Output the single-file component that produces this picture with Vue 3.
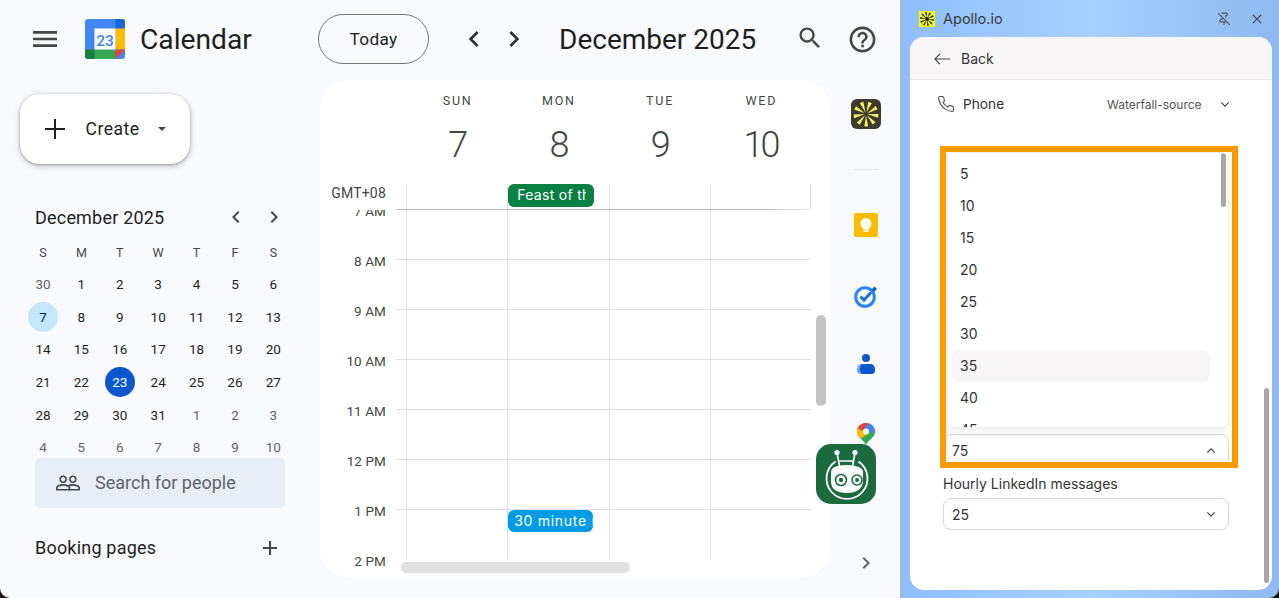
<template>
  <div class="window">
    <div class="calendar">
      <header class="topbar">
        <div class="brand">
          <svg class="menu-icon" viewBox="0 0 24 24"><path d="M3 18h18v-2H3v2zm0-5h18v-2H3v2zm0-7v2h18V6H3z" /></svg>
          <svg class="logo" viewBox="0 0 40 40">
            <rect width="40" height="40" rx="3" fill="#4285f4" />
            <path d="M30.500 0H37a3 3 0 0 1 3 3v6.500h-9.500z" fill="#1967d2" />
            <rect x="30.500" y="9.500" width="9.500" height="21" fill="#fbbc04" />
            <path d="M9.500 30.500h21V40h-21z" fill="#34a853" />
            <path d="M0 30.500h9.500V40H3a3 3 0 0 1-3-3z" fill="#188038" />
            <path d="M30.500 30.500H40L30.500 40z" fill="#ea4335" />
            <rect x="9.500" y="9.500" width="21" height="21" fill="#fff" />
            <text x="20" y="26.500" text-anchor="middle" class="logo-text">23</text>
          </svg>
          <span class="brand-name">Calendar</span>
        </div>
        <button class="today-btn">Today</button>
        <svg class="nav-icon first" viewBox="0 0 24 24"><path d="M15.410 7.410L14 6l-6 6 6 6 1.410-1.410L10.830 12z" /></svg>
        <svg class="nav-icon second" viewBox="0 0 24 24"><path d="M10 6L8.590 7.410 13.170 12l-4.580 4.590L10 18l6-6z" /></svg>
        <h1 class="month-title">December 2025</h1>
        <svg class="search-icon" viewBox="0 0 24 24"><path d="M15.500 14h-.79l-.28-.27C15.410 12.590 16 11.110 16 9.500 16 5.910 13.090 3 9.500 3S3 5.910 3 9.500 5.910 16 9.500 16c1.610 0 3.090-.59 4.230-1.570l.27.28v.79l5 4.990L20.490 19l-4.990-5zm-6 0C7.010 14 5 11.990 5 9.500S7.010 5 9.500 5 14 7.010 14 9.500 11.990 14 9.500 14z" /></svg>
        <svg class="help-icon" viewBox="0 0 24 24"><path d="M11 18h2v-2h-2v2zm1-16C6.480 2 2 6.480 2 12s4.480 10 10 10 10-4.480 10-10S17.520 2 12 2zm0 18c-4.410 0-8-3.590-8-8s3.590-8 8-8 8 3.590 8 8-3.590 8-8 8zm0-14c-2.210 0-4 1.790-4 4h2c0-1.100.9-2 2-2s2 .9 2 2c0 2-3 1.750-3 5h2c0-2.250 3-2.500 3-5 0-2.210-1.790-4-4-4z" /></svg>
      </header>

      <div class="columns">
        <aside class="sidebar">
          <button class="create-btn">
            <svg class="create-plus" viewBox="0 0 20 20"><path d="M9 0h2v9h9v2h-9v9H9v-9H0V9h9z" /></svg>
            <span class="create-label">Create</span>
            <span class="caret"></span>
          </button>

          <div class="mini-head">
            <span>December 2025</span>
            <svg class="mini-nav left" viewBox="0 0 24 24"><path d="M15.410 7.410L14 6l-6 6 6 6 1.410-1.410L10.830 12z" /></svg>
            <svg class="mini-nav" viewBox="0 0 24 24"><path d="M10 6L8.590 7.410 13.170 12l-4.580 4.590L10 18l6-6z" /></svg>
          </div>

          <div class="mini-grid">
            <span v-for="(d, i) in weekLetters" :key="'w' + i" class="mini-week">{{ d }}</span>
            <span
              v-for="(d, i) in miniDays"
              :key="i"
              class="mini-day"
              :class="{ muted: d.muted, picked: d.n === 7 && !d.muted, today: d.n === 23 }"
            ><i>{{ d.n }}</i></span>
          </div>

          <div class="people-search">
            <svg class="people-icon" viewBox="0 0 24 24"><path d="M16.500 13c-1.200 0-3.070.34-4.500 1-1.430-.67-3.300-1-4.500-1C5.330 13 1 14.080 1 16.250V19h22v-2.750c0-2.170-4.330-3.250-6.500-3.250zm-4 4.500h-10v-1.250c0-.54 2.560-1.750 5-1.750s5 1.210 5 1.750v1.250zm9 0H14v-1.250c0-.46-.2-.86-.52-1.220.88-.3 1.960-.53 3.020-.53 2.440 0 5 1.210 5 1.750v1.250zM7.500 12c1.930 0 3.500-1.570 3.500-3.500S9.430 5 7.500 5 4 6.570 4 8.500 5.570 12 7.500 12zm0-5.500c1.100 0 2 .9 2 2s-.9 2-2 2-2-.9-2-2 .9-2 2-2zm9 5.500c1.930 0 3.500-1.570 3.500-3.500S18.430 5 16.500 5 13 6.570 13 8.500s1.570 3.500 3.500 3.500zm0-5.500c1.100 0 2 .9 2 2s-.9 2-2 2-2-.9-2-2 .9-2 2-2z" /></svg>
            <span>Search for people</span>
          </div>

          <div class="booking">
            <span>Booking pages</span>
            <svg class="booking-plus" viewBox="0 0 24 24"><path d="M19 13h-6v6h-2v-6H5v-2h6V5h2v6h6v2z" /></svg>
          </div>
        </aside>

        <main class="week-card">
          <div class="week-head">
            <div v-for="d in weekDays" :key="d.name" class="day-head">
              <div class="day-name">{{ d.name }}</div>
              <div class="day-num">{{ d.num }}</div>
            </div>
          </div>
          <div class="allday">
            <div class="gmt">GMT+08</div>
            <div class="allday-cell"></div>
            <div class="allday-cell"><div class="feast"><span>Feast of the Immaculate</span></div></div>
            <div class="allday-cell"></div>
            <div class="allday-cell last"></div>
          </div>
          <div class="allday-rule"></div>
          <div class="week-body">
            <div class="hours">
              <div v-for="h in hours" :key="h" class="hour">{{ h }}</div>
            </div>
            <div class="hour-grid">
              <div class="day-col"></div>
              <div class="day-col">
                <div class="meeting">30 minute meeting</div>
              </div>
              <div class="day-col"></div>
              <div class="day-col"></div>
            </div>
          </div>
          <div class="scroll-x"></div>
          <div class="scroll-y"></div>
        </main>

        <nav class="rail">
          <svg class="apollo-app" viewBox="0 0 30 30">
            <rect width="30" height="30" rx="6" fill="#3d3a2f" />
            <polygon v-for="(p, i) in starLarge" :key="i" :points="p" fill="#f8fb5a" />
          </svg>
          <div class="rail-divider"></div>
          <svg class="keep" viewBox="0 0 24 24">
            <rect width="24" height="24" rx="2" fill="#fbbc04" />
            <circle cx="12" cy="10.500" r="5.500" fill="#fff" />
            <rect x="9.500" y="14" width="5" height="3" fill="#fff" />
            <rect x="9.500" y="17.500" width="5" height="1.500" fill="#fff" />
          </svg>
          <svg class="tasks" viewBox="0 0 24 24">
            <circle cx="11" cy="13" r="9.300" fill="none" stroke="#2684fc" stroke-width="3" />
            <path d="M6.500 12.500l3.500 3.500 7-7.500" fill="none" stroke="#1a6fe0" stroke-width="3" />
            <path d="M17.500 5.500l3-3 2.500 2.500-3 3z" fill="#0f5fd0" />
          </svg>
          <svg class="contacts" viewBox="0 0 18 22">
            <circle cx="9" cy="4" r="4" fill="#0b57d0" />
            <path d="M0 16c0-4 2-6 5-6h8c3 0 5 2 5 6 0 3-2 4-4 4H4c-2 0-4-1-4-4z" fill="#6f9ff0" />
            <path d="M3 15c0-3 1-5 3-5h7c3 0 5 2 5 6 0 3-2 4-4 4H6c-2 0-3-2-3-5z" fill="#0b57d0" />
          </svg>
          <svg class="maps" viewBox="0 0 18 22">
            <defs>
              <clipPath id="pin">
                <path d="M9 0C4 0 0 4 0 8.500c0 2.600 1.200 4.600 3 6.500 2.500 2.600 5 4.500 6 7 1-2.500 3.500-4.400 6-7 1.800-1.900 3-3.900 3-6.500C18 4 14 0 9 0z" />
              </clipPath>
            </defs>
            <g clip-path="url(#pin)">
              <rect width="18" height="22" fill="#34a853" />
              <polygon points="0,0 12,0 4,9 0,5" fill="#ea4335" />
              <polygon points="12,0 18,0 18,11 11,7 6,7" fill="#4285f4" />
              <polygon points="0,5 6,8 11,11 3,16 0,14" fill="#fbbc04" />
            </g>
            <circle cx="9" cy="8.500" r="3" fill="#fff" />
          </svg>
          <svg class="rail-chevron" viewBox="0 0 24 24"><path d="M10 6L8.590 7.410 13.170 12l-4.580 4.590L10 18l6-6z" /></svg>
        </nav>
      </div>

      <!-- floating bot launcher -->
      <svg class="bot" viewBox="0 0 60 60">
        <rect width="60" height="60" rx="15" fill="#1c6b3f" />
        <path d="M19.500 17.500a20.500 20.500 0 1 0 23 0" fill="none" stroke="#fff" stroke-width="1.800" />
        <path d="M21 9l2.500 13M39 9l-2.500 13M22 17h16" stroke="#fff" stroke-width="1.600" />
        <circle cx="21" cy="8.500" r="2.600" fill="#fff" />
        <circle cx="39" cy="8.500" r="2.600" fill="#fff" />
        <path d="M15 28c0-4 5-7 15-7 11 0 17 3 17 7v9c0 8-7 12-16 12-11 0-16-4-16-12z" fill="#fff" />
        <circle cx="25" cy="36" r="5.500" fill="none" stroke="#1c6b3f" stroke-width="1.600" />
        <circle cx="25" cy="36" r="2.200" fill="#1c6b3f" />
        <circle cx="41" cy="36" r="5" fill="none" stroke="#1c6b3f" stroke-width="1.600" />
        <circle cx="41" cy="36" r="2" fill="#1c6b3f" />
      </svg>
    </div>

    <div class="panel">
      <div class="panel-title">
        <svg class="apollo-small" viewBox="0 0 16 16">
          <rect width="16" height="16" fill="#f4f91c" />
          <polygon v-for="(p, i) in starSmall" :key="i" :points="p" fill="#1c1c10" />
          <circle cx="8" cy="8" r="2" fill="#1c1c10" />
        </svg>
        <span class="panel-name">Apollo.io</span>
        <svg class="pin-off" viewBox="0 0 24 24"><path d="M12 17v5M9 9v1.760a2 2 0 0 1-1.110 1.790l-1.780.9A2 2 0 0 0 5 15.240V17h12M15 9.340V6h1a2 2 0 0 0 0-4H7.890M2 2l20 20M9 6.500V6" /></svg>
        <svg class="close-x" viewBox="0 0 24 24"><path d="M5 5l14 14M19 5L5 19" /></svg>
      </div>

      <div class="panel-card">
        <div class="back-row">
          <svg class="back-arrow" viewBox="0 0 16 12"><path d="M6 .8L.8 6 6 11.200M.8 6H16" /></svg>
          <span>Back</span>
        </div>
        <div class="panel-body">
          <div class="phone-row">
            <svg class="phone-icon" viewBox="0 0 24 24"><path d="M22 16.920v3a2 2 0 0 1-2.180 2 19.790 19.790 0 0 1-8.630-3.070 19.500 19.500 0 0 1-6-6 19.790 19.790 0 0 1-3.070-8.670A2 2 0 0 1 4.110 2h3a2 2 0 0 1 2 1.720 12.840 12.840 0 0 0 .7 2.810 2 2 0 0 1-.45 2.110L8.090 9.910a16 16 0 0 0 6 6l1.270-1.270a2 2 0 0 1 2.110-.45 12.840 12.840 0 0 0 2.810.7A2 2 0 0 1 22 16.920z" /></svg>
            <span class="phone-label">Phone</span>
            <span class="phone-source">Waterfall-source</span>
            <svg class="chev" viewBox="0 0 12 8"><path d="M1.500 1.500L6 6l4.500-4.500" /></svg>
          </div>

          <div class="select open">
            <span>75</span>
            <svg class="chev" viewBox="0 0 12 8"><path d="M1.500 6.500L6 2l4.500 4.500" /></svg>
          </div>

          <label class="field-label">Hourly LinkedIn messages</label>
          <div class="select">
            <span>25</span>
            <svg class="chev" viewBox="0 0 12 8"><path d="M1.500 1.500L6 6l4.500-4.500" /></svg>
          </div>
        </div>

        <div class="menu">
          <div v-for="n in options" :key="n" class="menu-item" :class="{ hovered: n === 35 }">{{ n }}</div>
          <div class="menu-thumb"></div>
        </div>
        <div class="highlight"></div>
        <div class="panel-scroll"></div>
      </div>
    </div>
  </div>
</template>

<script setup>
const weekLetters = ['S', 'M', 'T', 'W', 'T', 'F', 'S']

// 42 cells, Nov 30 to Jan 10
const miniDays = []
miniDays.push({ n: 30, muted: true })
for (let i = 1; i <= 31; i++) miniDays.push({ n: i, muted: false })
for (let i = 1; i <= 10; i++) miniDays.push({ n: i, muted: true })

const weekDays = [
  { name: 'SUN', num: 7 },
  { name: 'MON', num: 8 },
  { name: 'TUE', num: 9 },
  { name: 'WED', num: 10 }
]

const hours = ['7 AM', '8 AM', '9 AM', '10 AM', '11 AM', '12 PM', '1 PM', '2 PM']
const options = [5, 10, 15, 20, 25, 30, 35, 40, 45]

// spokes of the Apollo mark
const makeStar = (c, inner, outer, half, count) => {
  const out = []
  for (let i = 0; i < count; i++) {
    const a = (i * Math.PI * 2) / count + 0.16
    const px = (r, d) => (c + Math.cos(a + d) * r).toFixed(2) + ',' + (c + Math.sin(a + d) * r).toFixed(2)
    out.push([px(inner, 0), px(outer, -half), px(outer, half)].join(' '))
  }
  return out
}
const starLarge = makeStar(15, 1.500, 12.500, 0.15, 9)
const starSmall = makeStar(8, 1, 7, 0.13, 10)
</script>

<style>
html, body {
  margin: 0;
  overflow: hidden;
  background: #15130f;
}
</style>

<style scoped>
.window {
  display: flex;
  width: 1279px;
  height: 598px;
  border-radius: 0 0 10px 10px;
  overflow: hidden;
  font-family: Roboto, "Noto Sans", sans-serif;
  color: #1f1f1f;
}

.calendar {
  position: relative;
  width: 901px;
  flex: none;
  box-sizing: border-box;
  background: #f8fafd;
  border-right: 1px solid #b4b8b8;
}

.topbar {
  display: flex;
  align-items: center;
  height: 78px;
  padding-bottom: 2px;
}

.brand {
  display: flex;
  align-items: center;
  width: 318px;
  flex: none;
}

.menu-icon {
  width: 32px;
  height: 32px;
  margin-left: 29px;
  fill: #444746;
}

.logo {
  width: 40px;
  height: 40px;
  margin-left: 24px;
}

.logo-text {
  font: 500 15.500px Roboto, sans-serif;
  fill: #4285f4;
}

.brand-name {
  margin-left: 15px;
  font-size: 28.200px;
  color: #1f1f1f;
}

.today-btn {
  width: 111px;
  height: 50px;
  flex: none;
  box-sizing: border-box;
  border: 1px solid #747775;
  border-radius: 25px;
  background: transparent;
  font: 400 17.300px Roboto, sans-serif;
  letter-spacing: 0.300px;
  color: #1f1f1f;
}

.nav-icon {
  width: 32px;
  height: 32px;
  fill: #303134;
  flex: none;
}

.nav-icon.first {
  margin-left: 29px;
}

.nav-icon.second {
  margin-left: 8px;
}

.month-title {
  margin: 0 0 0 29px;
  width: 237px;
  flex: none;
  font-size: 28px;
  font-weight: 400;
  white-space: nowrap;
}

.search-icon {
  width: 28px;
  height: 28px;
  margin-bottom: 2px;
  fill: #444746;
  flex: none;
}

.help-icon {
  width: 31px;
  height: 31px;
  margin-left: 23px;
  fill: #444746;
  flex: none;
}

.columns {
  display: flex;
}

.sidebar {
  width: 320px;
  flex: none;
  display: flex;
  flex-direction: column;
}

.create-btn {
  display: flex;
  align-items: center;
  width: 170px;
  height: 70px;
  margin: 14px 0 0 20px;
  padding: 0 0 0 25px;
  box-sizing: border-box;
  border: none;
  border-radius: 20px;
  background: #fff;
  box-shadow: 0 1px 3px rgba(0, 0, 0, 0.3), 0 2px 6px 1px rgba(0, 0, 0, 0.15);
  font: 400 17.500px Roboto, sans-serif;
  letter-spacing: 0.500px;
  color: #1f1f1f;
}

.create-plus {
  width: 20px;
  height: 20px;
  margin-right: 20px;
  fill: #1f1f1f;
}

.create-label {
  width: 55px;
}

.caret {
  width: 0;
  height: 0;
  margin-left: 18px;
  border-left: 4.500px solid transparent;
  border-right: 4.500px solid transparent;
  border-top: 4.500px solid #444746;
}

.mini-head {
  display: flex;
  align-items: center;
  height: 20px;
  margin: 43px 0 0 35px;
  font-size: 18px;
}

.mini-head span {
  width: 189px;
  white-space: nowrap;
  letter-spacing: 0.200px;
}

.mini-nav {
  width: 24px;
  height: 24px;
  fill: #444746;
  flex: none;
}

.mini-nav.left {
  margin-right: 14px;
}

.mini-grid {
  display: grid;
  grid-template-columns: repeat(7, 38.400px);
  grid-template-rows: 31px repeat(6, 32.600px);
  margin: 10px 0 -5.600px 23.800px;
  font-size: 13.500px;
}

.mini-week,
.mini-day {
  display: flex;
  align-items: center;
  justify-content: center;
}

.mini-week {
  font-size: 12.500px;
  color: #444746;
}

.mini-day {
  color: #1f1f1f;
}

.mini-day i {
  display: flex;
  align-items: center;
  justify-content: center;
  width: 30px;
  height: 30px;
  border-radius: 50%;
  font-style: normal;
}

.mini-day.muted {
  color: #5f6368;
}

.mini-day.picked i {
  background: #c2e7ff;
  color: #001d35;
}

.mini-day.today i {
  background: #0b57d0;
  color: #fff;
}

.people-search {
  position: relative;
  display: flex;
  align-items: center;
  width: 250px;
  height: 50px;
  margin-left: 35px;
  box-sizing: border-box;
  border-radius: 5px;
  background: #e9eef6;
  font-size: 18px;
  color: #5f6368;
}

.people-icon {
  width: 26px;
  height: 26px;
  margin: 0 14px 0 20px;
  fill: #444746;
}

.booking {
  display: flex;
  align-items: center;
  justify-content: space-between;
  width: 247px;
  height: 20px;
  margin: 30px 0 0 35px;
  font-size: 18px;
  letter-spacing: 0.200px;
}

.booking-plus {
  width: 24px;
  height: 24px;
  fill: #444746;
}

.week-card {
  position: relative;
  width: 510px;
  height: 497px;
  flex: none;
  border-radius: 28px;
  background: #fff;
  overflow: hidden;
}

.week-head {
  display: grid;
  grid-template-columns: repeat(4, 101.250px);
  height: 104px;
  padding-left: 87px;
}

.day-head {
  text-align: center;
  color: #444746;
}

.day-name {
  margin-top: 13px;
  font-size: 12.500px;
  line-height: 16px;
  letter-spacing: 1.800px;
}

.day-num {
  margin-top: 14px;
  padding-right: 2px;
  font-size: 36px;
  font-weight: 300;
  line-height: 44px;
  letter-spacing: -3px;
}

.allday {
  display: grid;
  grid-template-columns: 86px repeat(4, 101.250px);
  height: 25px;
}

.gmt {
  padding-right: 20px;
  text-align: right;
  font-size: 14px;
  letter-spacing: 0.200px;
  line-height: 18px;
  color: #444746;
}

.allday-cell {
  border-left: 1px solid #dde1e6;
}

.allday-cell.last {
  border-right: 1px solid #dde1e6;
}

.feast {
  width: 86px;
  height: 23px;
  padding: 0 8px 0 9px;
  box-sizing: border-box;
  border-radius: 6px;
  background: #0b8043;
  color: #fff;
  font-family: Inter, Roboto, sans-serif;
  font-size: 14px;
  letter-spacing: 0.300px;
  line-height: 22px;
}

.feast span {
  display: block;
  overflow: hidden;
  white-space: nowrap;
}

.allday-rule {
  width: 415px;
  height: 1px;
  margin-left: 76px;
  background: linear-gradient(90deg, #bcbfc4 90%, #f0f0f0);
}

.week-body {
  display: flex;
  height: 367px;
  overflow: hidden;
}

.hours {
  width: 76px;
  flex: none;
  margin-top: -9px;
}

.hour {
  height: 50px;
  padding-right: 10px;
  text-align: right;
  font-size: 13.500px;
  letter-spacing: 0.100px;
  line-height: 20px;
  color: #444746;
}

.hour-grid {
  display: grid;
  grid-template-columns: repeat(4, 101.250px);
  width: 415px;
  height: 349px;
  padding-left: 10px;
  box-sizing: border-box;
  background: repeating-linear-gradient(to bottom, transparent 0 49px, #dde1e6 49px 50px);
}

.day-col {
  position: relative;
  border-left: 1px solid #dde1e6;
}

.meeting {
  position: absolute;
  top: 300px;
  left: 0;
  width: 85px;
  height: 22px;
  padding-left: 6px;
  box-sizing: border-box;
  border-radius: 6px;
  background: #039be5;
  color: #fff;
  font-family: Inter, Roboto, sans-serif;
  font-size: 14px;
  letter-spacing: 0.700px;
  line-height: 22px;
  white-space: nowrap;
  overflow: hidden;
}

.scroll-x {
  position: absolute;
  left: 81px;
  top: 482px;
  width: 229px;
  height: 11px;
  border-radius: 6px;
  background: #e1e1e1;
}

.scroll-y {
  position: absolute;
  left: 496px;
  top: 235px;
  width: 10px;
  height: 91px;
  border-radius: 5px;
  background: #c4c4c4;
}

.rail {
  width: 70px;
  height: 518px;
  flex: none;
  box-sizing: border-box;
  padding: 19px 0 0 2px;
  display: flex;
  flex-direction: column;
  align-items: center;
}

.apollo-app {
  width: 30px;
  height: 30px;
  flex: none;
}

.rail-divider {
  width: 25px;
  height: 1px;
  margin-top: 40px;
  background: #e3e5e8;
}

.keep {
  width: 24px;
  height: 24px;
  margin-top: 43px;
  flex: none;
}

.tasks {
  width: 24px;
  height: 24px;
  margin-top: 47px;
  flex: none;
}

.contacts {
  width: 18px;
  height: 22px;
  margin-top: 46px;
  flex: none;
}

.maps {
  width: 18px;
  height: 22px;
  margin-top: 47px;
  flex: none;
}

.rail-chevron {
  width: 24px;
  height: 24px;
  margin-top: auto;
  margin-bottom: 23px;
  fill: #5f6368;
  flex: none;
}

.bot {
  position: absolute;
  left: 816px;
  top: 444px;
  width: 60px;
  height: 60px;
}

.panel {
  flex: 1;
  display: flex;
  flex-direction: column;
  background: linear-gradient(90deg, #8fbefc, #a6d0fe 50%, #8eb9f1);
  font-family: Inter, "Noto Sans", sans-serif;
  color: #333;
}

.panel-title {
  display: flex;
  align-items: center;
  height: 37px;
  flex: none;
  padding-left: 18px;
}

.apollo-small {
  width: 16px;
  height: 16px;
}

.panel-name {
  width: 274px;
  margin-left: 8px;
  margin-bottom: 1px;
  font-size: 14.500px;
  color: #3b3b3b;
}

.pin-off {
  width: 14px;
  height: 14px;
  fill: none;
  stroke: #555;
  stroke-width: 2;
}

.close-x {
  width: 14px;
  height: 14px;
  margin-left: 19px;
  fill: none;
  stroke: #444;
  stroke-width: 2;
}

.panel-card {
  position: relative;
  width: 362px;
  height: 553px;
  margin-left: 9px;
  border-radius: 14px;
  background: #fff;
  overflow: hidden;
}

.back-row {
  display: flex;
  align-items: center;
  height: 43px;
  box-sizing: border-box;
  padding: 1px 0 0 24px;
  border-bottom: 1px solid #e8e8e8;
  background: #f7f5f5;
  font-size: 14px;
}

.back-arrow {
  width: 16px;
  height: 12px;
  margin-right: 11px;
  fill: none;
  stroke: #444;
  stroke-width: 1.200;
}

.panel-body {
  padding: 0 43px 0 33px;
}

.phone-row {
  display: flex;
  align-items: center;
  height: 48px;
  font-size: 13.700px;
}

.phone-row > * {
  flex: none;
}

.phone-icon {
  width: 18px;
  height: 18px;
  margin-left: -6px;
  fill: none;
  stroke: #555;
  stroke-width: 1.500;
}

.phone-label {
  width: 144px;
  margin-left: 8px;
}

.phone-source {
  width: 113px;
  font-size: 12px;
  color: #555;
}

.chev {
  width: 10px;
  height: 7px;
  fill: none;
  stroke: #444;
  stroke-width: 1.400;
}

.select {
  display: flex;
  align-items: center;
  justify-content: space-between;
  height: 32px;
  box-sizing: border-box;
  padding: 0 12px 0 8px;
  border: 1px solid #d6d6d6;
  border-radius: 8px;
  background: #fff;
  font-size: 14px;
}

.select.open {
  margin-top: 306px;
}

.field-label {
  display: block;
  margin-top: 9px;
  margin-bottom: 5px;
  font-size: 14px;
  line-height: 18px;
}

.menu {
  position: absolute;
  left: 35px;
  top: 115px;
  width: 284px;
  height: 276px;
  box-sizing: border-box;
  padding: 5px 0 0 6px;
  border: 1px solid #eeeeee;
  border-radius: 8px;
  background: #fff;
  box-shadow: 0 4px 8px rgba(0, 0, 0, 0.06);
  overflow: hidden;
}

.menu-item {
  width: 258px;
  height: 32px;
  padding-left: 8px;
  box-sizing: border-box;
  border-radius: 8px;
  font-size: 14px;
  line-height: 32px;
}

.menu-item.hovered {
  background: #f7f5f5;
}

.menu-thumb {
  position: absolute;
  left: 275px;
  top: 0;
  width: 5px;
  height: 54px;
  border-radius: 3px;
  background: #aaa6a6;
}

.highlight {
  position: absolute;
  left: 30px;
  top: 109px;
  width: 298px;
  height: 322px;
  box-sizing: border-box;
  border: 6px solid #ff9900;
  pointer-events: none;
}

.panel-scroll {
  position: absolute;
  left: 354px;
  top: 351px;
  width: 5px;
  height: 195px;
  border-radius: 3px;
  background: #aaa6a6;
}
</style>
